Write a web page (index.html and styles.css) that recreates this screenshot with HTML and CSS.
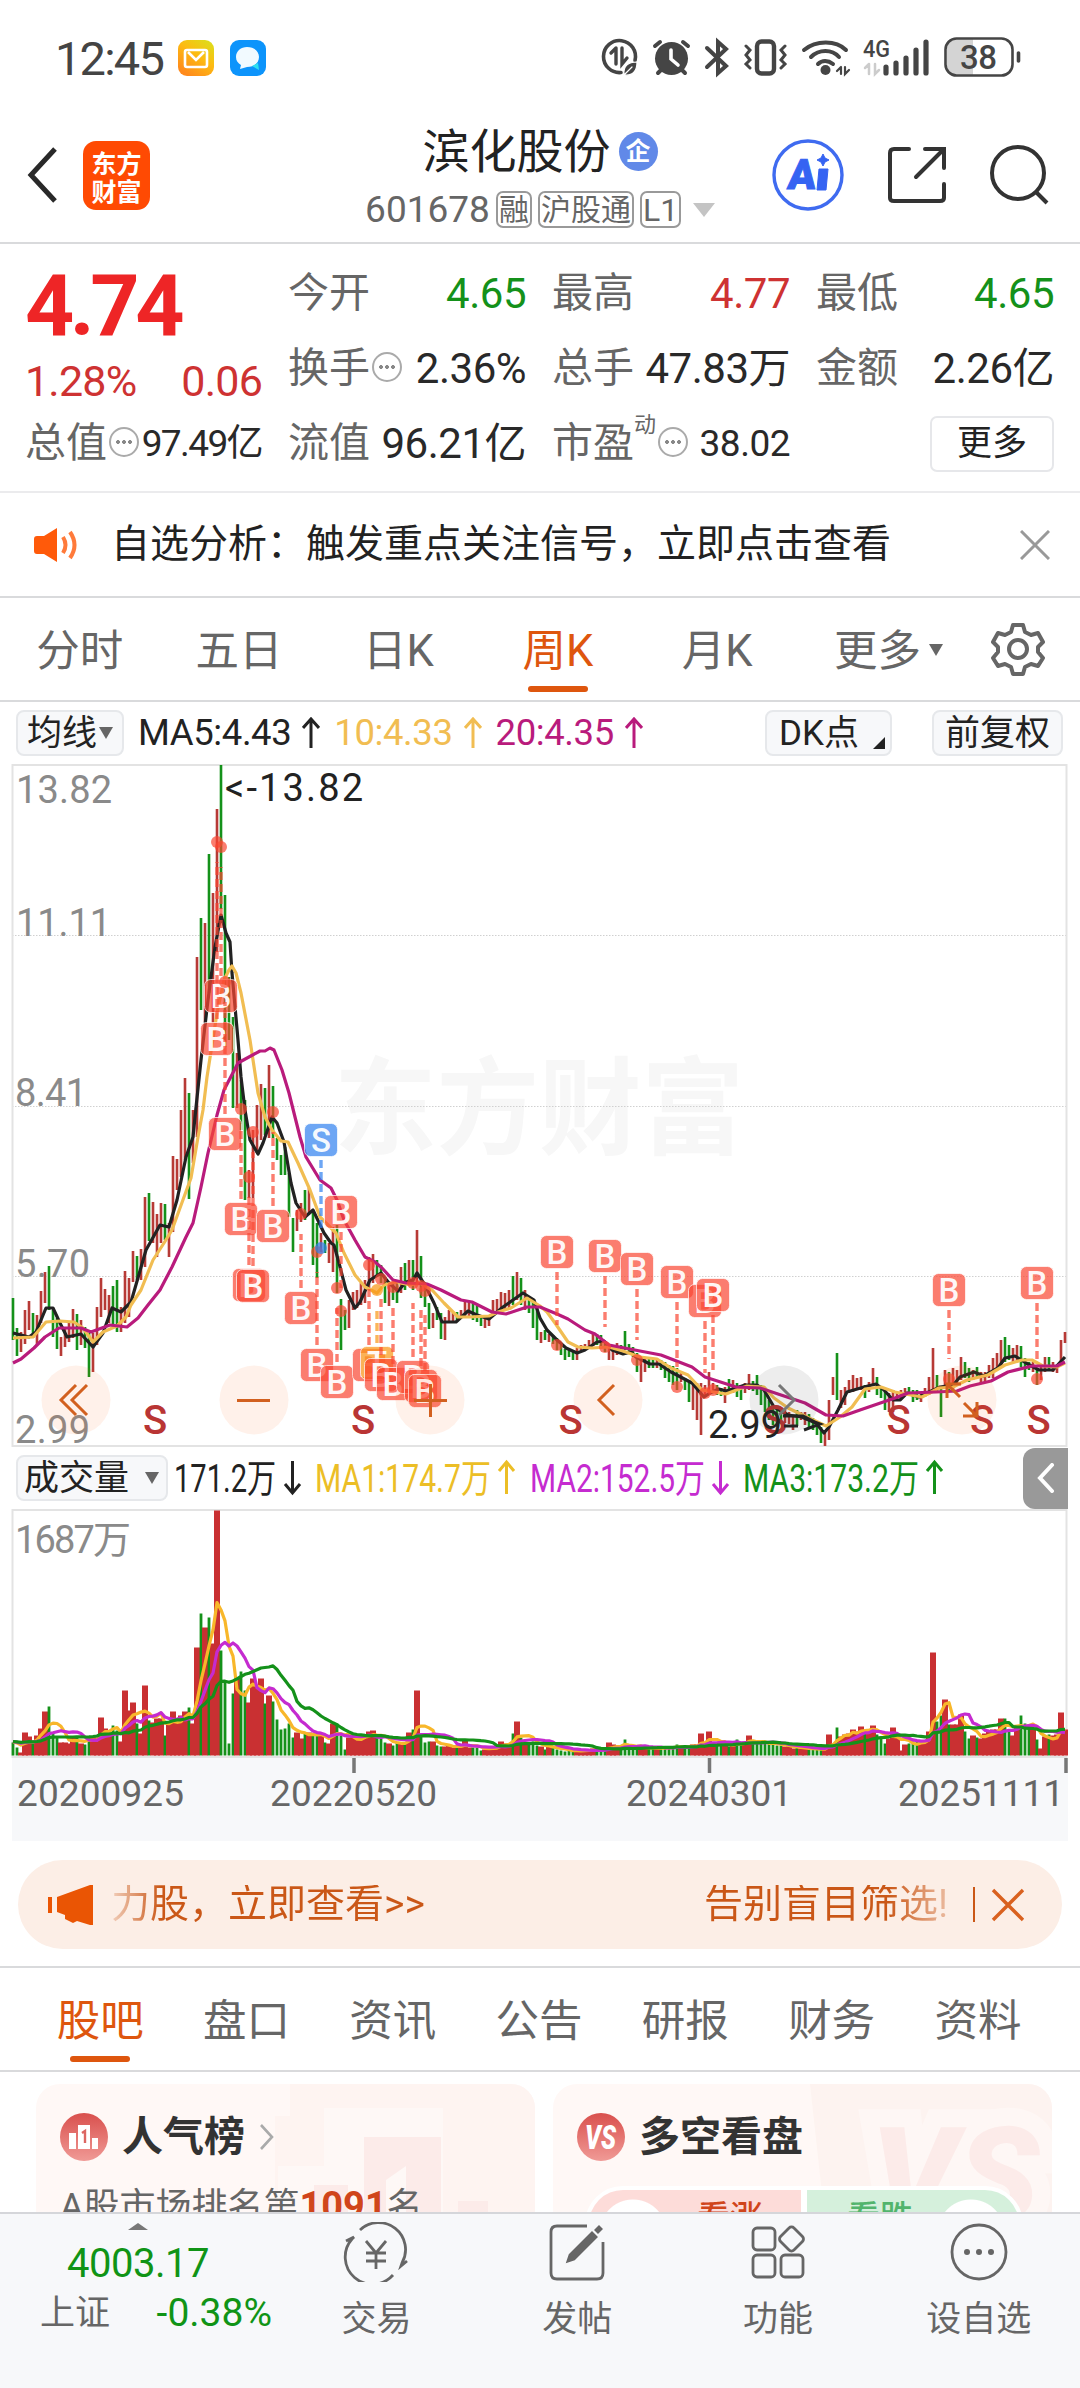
FILE: index.html
```html
<!DOCTYPE html>
<html lang="zh-CN">
<head>
  <meta charset="UTF-8" />
  <meta name="viewport" content="width=device-width, initial-scale=1.0" />
  <title>滨化股份 601678</title>
  <link rel="stylesheet" href="styles.css">
</head>
<body>
  <div class="status-bar">
    <span class="clock">12:45</span>
    <svg class="app-dot" width="36" height="36" viewBox="0 0 36 36">
      <defs><linearGradient id="mail" x1="1" y1="0" x2="0.3" y2="1"><stop offset="0" stop-color="#d8e21c"/><stop offset="0.5" stop-color="#fdbb11"/><stop offset="1" stop-color="#ff8a1c"/></linearGradient></defs>
      <rect width="36" height="36" rx="9" fill="url(#mail)"/>
      <rect x="7" y="10" width="22" height="17" rx="2" fill="none" stroke="#fff" stroke-width="2.6"/>
      <path d="M10 12l8 8 8-8" fill="none" stroke="#fff" stroke-width="2.6"/>
    </svg>
    <svg class="app-dot" width="36" height="36" viewBox="0 0 36 36">
      <rect width="36" height="36" rx="9" fill="#0d94fb"/>
      <path d="M17 7c7 0 12 4 12 10s-5 10-12 10l-7 2 1-4c-3-2-5-4-5-8 0-6 5-10 11-10z" fill="#f2faff"/>
      <path d="M22 26l6-3 1 7z" fill="#2fe0f0"/>
    </svg>
    <svg class="status-icons" width="424" height="44" viewBox="598 36 424 44" fill="none" stroke="#454545" stroke-width="4" stroke-linecap="round">
      <path d="M621 72.500a16 16 0 1 1 14-12" stroke-width="3.600"/>
      <path d="M616 48v16M616 48l-5 5M622 48v16l5-6" stroke-width="3.400"/>
      <path d="M624 75c-1-9 4-13 13-13 0 9-4 14-13 13zl8-8" fill="#454545" stroke="#fff" stroke-width="1.200"/>
      <circle cx="671.500" cy="58.500" r="16.500" fill="#454545" stroke="none"/>
      <path d="M655 46l5-4M688 46l-5-4M661 70l-3 3M682 70l3 3"/>
      <path d="M671 50v9l7 6" stroke="#fff" stroke-width="3.600"/>
      <path d="M707 48l19 18-8 7V42l8 7-19 18"/>
      <rect x="757" y="41.500" width="17" height="32" rx="4.500" stroke-width="4.400"/>
      <path d="M746 46l4 4-4 5 4 5-4 4 4 4M785 46l-4 4 4 5-4 5 4 4-4 4" stroke-width="3"/>
      <path d="M804 50c12-10 32-10 42 0M811 57c8-8 21-8 28 0M818 64c4-4 10-4 15 0" stroke-width="4"/>
      <circle cx="825.500" cy="70" r="5" fill="#454545" stroke="none"/>
      <path d="M841 67v7M841 67l-4 4M845 67v7l4-4" stroke-width="2.200"/>
      <text x="863" y="57" font-size="24" textLength="27" lengthAdjust="spacingAndGlyphs" font-weight="500" fill="#454545" stroke="none">4G</text>
      <path d="M869 64v10M869 64l-4 4M875 64v10l4-4" stroke="#ccc" stroke-width="2.500"/>
      <path d="M886 73V67M896 73V63M906 73V58M916 73V50M926 73V42" stroke-width="5.200"/>
      <path d="M973 39H956q-9 0-9 9v18q0 9 9 9h17z" fill="#d4d4d4" stroke="none"/>
      <rect x="945.500" y="38.500" width="67" height="37" rx="11" stroke-width="2.600"/>
      <path d="M1018.500 53v8" stroke-width="3.600"/>
      <text x="960" y="68.500" font-size="33" font-weight="500" textLength="37" fill="#454545" stroke="none">38</text>
    </svg>
  </div>

  <header class="header">
    <div class="header-left">
      <svg width="32" height="56" viewBox="0 0 32 56"><path d="M28 2L4 28l24 26" fill="none" stroke="#292929" stroke-width="5"/></svg>
      <div class="logo">东方<br>财富</div>
    </div>
    <div class="title">
      <div class="stock-name">滨化股份<span class="badge">企</span></div>
      <div class="stock-code"><span>601678</span><i class="tag">融</i><i class="tag">沪股通</i><i class="tag l1">L1</i><b class="caret"></b></div>
    </div>
    <div class="header-right">
      <svg width="74" height="74" viewBox="0 0 74 74">
        <circle cx="37" cy="37" r="34" fill="none" stroke="#3f6bf0" stroke-width="3.400"/>
        <text x="21" y="51" font-size="42" font-weight="900" textLength="28" lengthAdjust="spacingAndGlyphs" transform="skewX(-6)" fill="#3563f2" stroke="#3563f2">A</text>
        <path d="M48 31h9l-2 21h-9z" fill="#3563f2" stroke="#3563f2" stroke-linejoin="round"/>
        <path d="M52 16l2 4 4 2-4 2-2 4-2-4-4-2 4-2z" fill="#3563f2" stroke="#3563f2"/>
      </svg>
      <svg width="58" height="58" viewBox="0 0 58 58" fill="none" stroke="#333" stroke-width="4" stroke-linecap="round"><path d="M21 3H6q-4 0-4 4v45q0 3 4 3h46q4 0 4-3V38M37 3h19v19M55 4L28 31"/></svg>
      <svg width="60" height="60" viewBox="0 0 60 60" fill="none" stroke="#333" stroke-width="4"><circle cx="29" cy="28" r="26"/><path d="M46 46l12 12"/></svg>
    </div>
  </header>

  <section class="quote">
    <div class="price-col">
      <div class="price">4.74</div>
      <div class="change"><span>1.28%</span><span>0.06</span></div>
      <div class="cell"><span class="label">总值</span><b class="info"></b><span class="value small">97.49亿</span></div>
    </div>
    <div class="grid">
      <div class="cell"><span class="label">今开</span><span class="value down">4.65</span></div>
      <div class="cell"><span class="label">最高</span><span class="value up">4.77</span></div>
      <div class="cell"><span class="label">最低</span><span class="value down">4.65</span></div>
      <div class="cell"><span class="label">换手</span><b class="info"></b><span class="value">2.36%</span></div>
      <div class="cell"><span class="label">总手</span><span class="value">47.83万</span></div>
      <div class="cell"><span class="label">金额</span><span class="value">2.26亿</span></div>
      <div class="cell"><span class="label">流值</span><span class="value">96.21亿</span></div>
      <div class="cell"><span class="label">市盈</span><sup>动</sup><b class="info"></b><span class="value small">38.02</span></div>
      <div class="cell"><span class="more-btn">更多</span></div>
    </div>
  </section>

  <div class="notice">
    <svg width="46" height="38" viewBox="0 0 46 38"><path d="M1 13q0-3 3-3h7L24 2v34l-13-8H4q-3 0-3-3z" fill="#ff5a0a"/><path d="M30 11q5 8 0 16M37 6q9 13 0 26" fill="none" stroke="#ff7a3a" stroke-width="4"/></svg>
    <span>自选分析：触发重点关注信号，立即点击查看</span>
    <svg class="close" width="30" height="30" viewBox="0 0 30 30"><path d="M1 1l28 28M29 1L1 29" stroke="#999" stroke-width="3"/></svg>
  </div>

  <nav class="tabs period-tabs">
    <div class="tab">分时</div>
    <div class="tab">五日</div>
    <div class="tab">日K</div>
    <div class="tab active">周K</div>
    <div class="tab">月K</div>
    <div class="tab wide">更多<b class="caret dark"></b></div>
    <svg width="54" height="54" viewBox="0 0 54 54" fill="none" stroke="#666" stroke-width="4"><path d="M22 3h10l2 7 6 3 7-2 5 9-5 5v5l5 6-5 8-7-2-6 3-2 7H22l-2-7-6-3-7 2-5-8 5-6v-5l-5-5 5-9 7 2 6-3z" stroke-linejoin="round"/><circle cx="27" cy="27" r="9"/></svg>
  </nav>

  <div class="ma-row">
    <span class="chip">均线<b class="caret dark"></b></span>
    <span class="ma">MA5:4.43<svg class="arrow" viewBox="0 0 18 32"><path d="M9 31V2M1 11l8-9 8 9"/></svg></span>
    <span class="ma yellow">10:4.33<svg class="arrow" viewBox="0 0 18 32"><path d="M9 31V2M1 11l8-9 8 9"/></svg></span>
    <span class="ma pink">20:4.35<svg class="arrow" viewBox="0 0 18 32"><path d="M9 31V2M1 11l8-9 8 9"/></svg></span>
    <span class="chip dk">DK点<svg width="12" height="12" viewBox="0 0 12 12"><path d="M12 0v12H0z" fill="#222"/></svg></span>
    <span class="chip adjust">前复权</span>
  </div>

  <svg class="chart" width="1080" height="683" viewBox="0 764 1080 683">
    <text class="watermark" x="334" y="1146" textLength="410" lengthAdjust="spacingAndGlyphs">东方财富</text>
    <path class="grid-line" d="M12 935.500H1067M12 1106.500H1067M12 1276.500H1067"/>
    <rect class="frame" x="12.500" y="765" width="1054" height="681"/>
    <g class="axis-text">
      <text x="16" y="803" textLength="96">13.82</text>
      <text x="16" y="936" textLength="95">11.11</text>
      <text x="15" y="1106" textLength="72">8.41</text>
      <text x="15" y="1277" textLength="75">5.70</text>
      <text x="15" y="1443" textLength="75">2.99</text>
    </g>
    <g id="candles"></g>
    <polyline class="line black" points="13,1333 29,1337 36,1332 46,1308 53,1308 60,1323 67,1337 81,1334 93,1347 103,1333 112,1308 121,1312 131,1302 146,1250 160,1225 169,1227 177,1200 186,1157 193,1137 195,1117 201,1060 208,1000 215,947 221,915 226,933 230,942 232,973 238,1040 241,1077 245,1110 250,1140 258,1154 263,1143 272,1117 277,1123 284,1142 291,1183 296,1203 305,1217 313,1210 324,1233 331,1243 334,1245 339,1263 346,1290 355,1308 360,1302 370,1280 381,1273 389,1283 398,1291 406,1282 413,1280 417,1273 425,1285 434,1303 442,1322 456,1322 468,1311 477,1315 489,1319 503,1307 513,1300 523,1293 534,1300 540,1318 547,1330 557,1340 566,1348 577,1353 585,1350 597,1342 604,1341 612,1350 623,1354 631,1352 636,1357 650,1364 659,1364 671,1372 692,1383 704,1397 710,1393 719,1389 726,1391 736,1388 745,1385 757,1385 764,1390 774,1407 788,1415 802,1417 816,1423 824,1433 829,1427 838,1410 847,1392 864,1387 876,1384 884,1390 893,1400 900,1400 907,1393 919,1397 929,1392 940,1387 953,1385 960,1377 974,1372 984,1376 998,1368 1005,1358 1015,1356 1026,1363 1039,1370 1053,1370 1065,1357"/>
    <polyline class="line yellow" points="13,1338 33,1337 46,1322 60,1321 74,1322 83,1328 93,1342 103,1332 117,1326 126,1317 131,1305 141,1290 153,1260 164,1243 172,1230 184,1197 191,1178 198,1137 203,1110 207,1077 217,1013 224,980 229,970 232,966 236,973 241,993 250,1040 258,1093 265,1117 272,1130 281,1141 288,1142 298,1163 310,1190 320,1217 336,1233 344,1253 355,1275 365,1287 377,1293 384,1285 396,1282 410,1285 420,1283 432,1290 444,1303 458,1317 470,1317 489,1316 498,1312 511,1308 527,1298 540,1306 547,1312 555,1323 568,1342 578,1347 592,1348 609,1347 623,1351 640,1357 657,1359 671,1368 688,1375 702,1390 726,1394 747,1386 764,1387 774,1398 788,1408 809,1418 826,1426 840,1417 852,1407 865,1389 881,1387 895,1392 905,1394 922,1397 939,1388 953,1387 967,1380 988,1375 1005,1365 1022,1360 1032,1360 1043,1366 1057,1367 1065,1363"/>
    <polyline class="line pink" points="13,1363 21,1359 34,1348 45,1337 59,1328 81,1328 91,1332 110,1325 127,1327 138,1318 148,1305 160,1290 172,1267 186,1237 193,1223 201,1187 208,1153 217,1115 224,1090 238,1063 260,1051 265,1051 270,1048 274,1050 282,1070 289,1093 295,1117 300,1137 306,1157 320,1180 331,1188 337,1200 344,1220 355,1240 365,1257 375,1262 382,1268 393,1280 406,1283 427,1284 441,1290 461,1300 472,1302 492,1312 506,1314 527,1307 540,1307 557,1314 568,1319 585,1330 595,1334 609,1345 640,1351 661,1355 692,1367 705,1377 736,1387 760,1388 781,1395 805,1403 826,1415 843,1416 860,1410 895,1398 908,1393 936,1392 957,1391 970,1386 991,1381 1008,1372 1032,1366 1057,1366 1065,1362"/>
    <g class="sell-row">
      <text x="155" y="1434">S</text><text x="363" y="1434">S</text><text x="570.500" y="1434">S</text><text x="775" y="1434">S</text><text x="898.500" y="1434">S</text><text x="982" y="1434">S</text><text x="1038.500" y="1434">S</text>
    </g>
    <g id="markers"></g>
    <g class="peak-text">
      <text x="225" y="801" textLength="138">&lt;-13.82</text>
      <text x="708" y="1438" textLength="74">2.99</text>
      <path d="M784 1426h14M783 1416h20l16 8M804 1418l16 6-16 6"/>
    </g>
    <g class="controls">
      <circle cx="76" cy="1400" r="34.500"/><circle cx="254" cy="1400" r="34.500"/><circle cx="430" cy="1400" r="34.500"/><circle cx="608" cy="1400" r="34.500"/><circle class="off" cx="784" cy="1400" r="34.500"/><circle cx="962" cy="1400" r="34.500"/>
      <path d="M76 1385l-15 15 15 15M87 1385l-15 15 15 15M237 1400.500h33M414 1400.500h33M430.500 1384v33M614 1385l-15 15 15 15M960 1397l-12-12M947 1398v-14h14M964 1403l12 12M963 1416h14v-14"/>
      <path class="off-line" d="M779 1385l15 15-15 15"/>
    </g>
  </svg>

  <div class="vol-row">
    <span class="chip">成交量<b class="caret dark"></b></span>
    <svg width="780" height="46" viewBox="172 1455 780 46">
      <g class="vol-text">
        <text x="174" y="1492" textLength="102" lengthAdjust="spacingAndGlyphs" fill="#222">171.2万</text>
        <text x="315" y="1492" textLength="176" lengthAdjust="spacingAndGlyphs" fill="#ecbe26">MA1:174.7万</text>
        <text x="530" y="1492" textLength="175" lengthAdjust="spacingAndGlyphs" fill="#c52bd0">MA2:152.5万</text>
        <text x="743" y="1492" textLength="176" lengthAdjust="spacingAndGlyphs" fill="#14911a">MA3:173.2万</text>
      </g>
      <g fill="none" stroke-width="3">
        <path d="M292.500 1461v31M285 1484l7.500 9 7.500-9" stroke="#222"/>
        <path d="M506.500 1494v-31M499 1471l7.500-9 7.500 9" stroke="#ecbe26"/>
        <path d="M720.500 1461v31M713 1484l7.500 9 7.500-9" stroke="#c52bd0"/>
        <path d="M934.500 1494v-31M927 1471l7.500-9 7.500 9" stroke="#14911a"/>
      </g>
    </svg>
    <div class="expand"><svg width="18" height="30" viewBox="0 0 18 30"><path d="M15 2L3 15l12 13" fill="none" stroke="#fff" stroke-width="4" stroke-linecap="round"/></svg></div>
  </div>

  <svg class="chart" width="1080" height="332" viewBox="0 1509 1080 332">
    <rect x="12" y="1757" width="1056" height="84" fill="#f7f8fa"/>
    <rect class="frame" x="12.500" y="1510" width="1054" height="247"/>
    <text class="axis-text" x="15" y="1553" textLength="116">1687万</text>
    <g id="volumes"></g>
    <path d="M354 1758v15M709.500 1758v15M1066 1758v15" stroke="#777" stroke-width="3.500"/>
    <g class="date-text">
      <text x="17" y="1806" textLength="167">20200925</text>
      <text x="270" y="1806" textLength="167">20220520</text>
      <text x="626" y="1806" textLength="166">20240301</text>
      <text x="898" y="1806" textLength="166">20251111</text>
    </g>
  </svg>

  <div class="banner">
    <svg width="46" height="40" viewBox="0 0 46 40" fill="#ea5504"><path d="M0 12h4v16H0zM9 12L42 0h3v40h-3l-13-4-4 2-8-4v-4l-8-3z"/></svg>
    <span class="banner-left">力股，立即查看&gt;&gt;</span>
    <span class="banner-right">告别盲目筛选!</span>
    <i class="divider"></i>
    <svg width="34" height="34" viewBox="0 0 34 34"><path d="M2 2l30 30M32 2L2 32" stroke="#d9611f" stroke-width="3.400"/></svg>
  </div>

  <nav class="tabs info-tabs">
    <div class="tab active">股吧</div>
    <div class="tab">盘口</div>
    <div class="tab">资讯</div>
    <div class="tab">公告</div>
    <div class="tab">研报</div>
    <div class="tab">财务</div>
    <div class="tab">资料</div>
  </nav>

  <section class="cards">
    <div class="card">
      <svg class="card-bg" width="260" height="128" viewBox="275 0 260 128"><path d="M275 32h15V0h245v128H275z" fill="#fef4f1"/><path d="M278 82h46V24h119v104H278z" fill="#fef8f6"/><path d="M364 53h77v75h-35V82l-20 14v32h-22zM314 101h34v27h-34zM458 117h30v11h-30z" fill="#fcebe9"/></svg>
      <div class="card-title">
        <svg width="48" height="48" viewBox="0 0 48 48"><defs><linearGradient id="red" x1="0" y1="0" x2="0" y2="1"><stop offset="0" stop-color="#d9504d"/><stop offset="1" stop-color="#f09a96"/></linearGradient></defs><circle cx="24" cy="24" r="24" fill="url(#red)"/><path d="M9 20h7v16H9zM18 12h12v24H18zM32 25h6v11h-6z" fill="#fff"/><path d="M22 20l3-2v12" fill="none" stroke="#dd6662" stroke-width="2.400"/></svg>
        人气榜
        <svg width="16" height="26" viewBox="0 0 16 26"><path d="M2 1l11 12L2 25" fill="none" stroke="#aaa" stroke-width="2.600"/></svg>
      </div>
      <div class="rank">A股市场排名第<b>1091</b>名</div>
    </div>
    <div class="card">
      <svg class="card-bg" width="260" height="128" viewBox="275 0 260 128"><path d="M293 0h242v128H307z" fill="#fdf3f0"/><text class="card-vs" x="354" y="138" textLength="168" lengthAdjust="spacingAndGlyphs">VS</text></svg>
      <div class="card-title">
        <svg width="48" height="48" viewBox="0 0 48 48"><circle cx="24" cy="24" r="24" fill="url(#red)"/><text x="8" y="36" font-size="33" font-weight="900" font-style="italic" textLength="31" lengthAdjust="spacingAndGlyphs" fill="#fff">VS</text></svg>
        多空看盘
      </div>
      <div class="vote"><div class="vote-up">看涨</div><div class="vote-down">看跌</div></div>
    </div>
  </section>

  <footer class="bottom-bar">
    <div class="index">
      <b class="caret-up"></b>
      <div class="index-value">4003.17</div>
      <div class="index-row"><span>上证</span><em>-0.38%</em></div>
    </div>
    <div class="nav-item">
      <svg width="66" height="60" viewBox="0 0 66 60"><path d="M17 8a27 27 0 0 1 42 33l-1 3 6-5M50 53A27 27 0 0 1 9 17l2-2-8 4M23 19l10 12 10-12M33 31v16M23 31h20M23 39h20"/></svg>
      <span>交易</span>
    </div>
    <div class="nav-item">
      <svg width="60" height="60" viewBox="0 0 60 60"><path d="M40 4H10q-6 0-6 6v41q0 6 6 6h40q6 0 6-6V20"/><path d="M21 39l2-6 22-22 4 4-22 22zM49 8l3-3 2 2-3 3z" fill="#666"/></svg>
      <span>发帖</span>
    </div>
    <div class="nav-item">
      <svg width="60" height="60" viewBox="0 0 60 60"><rect x="5" y="6" width="22" height="22" rx="4"/><rect x="5" y="33" width="22" height="22" rx="4"/><rect x="33" y="33" width="22" height="22" rx="4"/><rect x="34" y="7.500" width="19" height="19" rx="3.500" transform="rotate(45 43.500 17)"/></svg>
      <span>功能</span>
    </div>
    <div class="nav-item">
      <svg width="60" height="60" viewBox="0 0 60 60"><circle cx="30" cy="30" r="27"/><g fill="#666" stroke="none"><circle cx="18" cy="30" r="3"/><circle cx="30" cy="30" r="3"/><circle cx="42" cy="30" r="3"/></g></svg>
      <span>设自选</span>
    </div>
  </footer>
  <script src="script.js"></script>
</body>
</html>
```
FILE: styles.css
```css
* {
  box-sizing: border-box;
}
body {
  margin: 0;
  width: 1080px;
  height: 2388px;
  overflow: hidden;
  background: #fff;
  color: #222;
  font-family: Roboto, "Noto Sans CJK SC", sans-serif;
  line-height: 1;
}
svg {
  display: block;
  flex: none;
}
i, em {
  font-style: normal;
}
.caret {
  border: 11px solid transparent;
  border-top: 14px solid #c4c4c4;
  border-bottom: 0;
}
.caret.dark {
  border-width: 12px 7.5px 0;
  border-top-color: #666;
}

/* status bar */
.status-bar {
  display: flex;
  align-items: center;
  height: 116px;
  padding-left: 55px;
}
.clock {
  width: 123px;
  font-size: 47px;
  letter-spacing: -1.8px;
  color: #444;
}
.app-dot {
  margin-right: 16px;
}
.status-icons {
  margin-left: 316px;
}

/* header */
.header {
  display: grid;
  grid-template-columns: 330px 1fr 330px;
  height: 128px;
  padding: 0 27px;
  border-bottom: 2px solid #d9dadc;
}
.header-left {
  display: flex;
  align-items: center;
  gap: 24px;
  padding-bottom: 8px;
}
.logo {
  width: 67px;
  height: 69px;
  padding-top: 7px;
  border-radius: 13px;
  background: #ff4a03;
  color: #fff;
  font-family: "Noto Sans CJK SC", sans-serif;
  font-size: 25px;
  font-weight: 700;
  line-height: 28px;
  text-align: center;
}
.title {
  display: flex;
  flex-direction: column;
  align-items: center;
}
.stock-name {
  display: flex;
  align-items: center;
  margin-top: 8px;
  height: 54px;
  font-size: 47px;
  white-space: nowrap;
}
.badge {
  display: grid;
  place-items: center;
  width: 39px;
  height: 39px;
  margin-left: 8px;
  border-radius: 50%;
  background: #6189e8;
  color: #fff;
  font-size: 25px;
  font-weight: 700;
}
.stock-code {
  display: flex;
  align-items: center;
  gap: 6px;
  margin-top: 13px;
  font-size: 37px;
  color: #666;
  white-space: nowrap;
}
.stock-code .tag {
  display: grid;
  place-items: center;
  height: 37px;
  padding: 0 1px;
  border: 2px solid #999;
  border-radius: 7px;
  font-size: 30px;
}
.stock-code .l1 {
  width: 41px;
  font-size: 32px;
}
.stock-code .caret {
  margin-left: 6px;
}
.header-right {
  display: flex;
  align-items: center;
  justify-content: flex-end;
  gap: 43px;
  padding: 0 4px 9px 0;
}

/* quote */
.quote {
  display: flex;
  height: 249px;
  padding: 12px 26px 0 25px;
  border-bottom: 2px solid #ebebed;
}
.price-col {
  width: 238px;
  margin-right: 26px;
}
.price {
  height: 100px;
  padding-top: 7px;
  color: #ee2526;
  font-size: 86px;
  font-weight: 700;
  letter-spacing: -4.5px;
}
.change {
  display: flex;
  justify-content: space-between;
  align-items: center;
  height: 50px;
  color: #ce3232;
  font-size: 43px;
  letter-spacing: -0.8px;
}
.price-col .value.small {
  letter-spacing: -1.6px;
}
.grid {
  display: grid;
  grid-template-columns: repeat(3, 238px);
  grid-auto-rows: 75px;
  column-gap: 26px;
}
.cell {
  display: flex;
  align-items: center;
  height: 75px;
  white-space: nowrap;
}
.label {
  color: #666;
  font-size: 41px;
}
.value {
  margin-left: auto;
  color: #292929;
  font-size: 42px;
  letter-spacing: -0.5px;
}
.value.small {
  font-size: 37px;
}
.value.up {
  color: #ce3232;
}
.value.down {
  color: #14911a;
}
.info {
  display: grid;
  place-items: center;
  flex: none;
  width: 30px;
  height: 30px;
  margin: 0 0 4px 2px;
  border: 2px solid #aaa;
  border-radius: 50%;
}
.info::after {
  content: "";
  width: 18px;
  height: 6px;
  background: radial-gradient(circle, #888 1.6px, transparent 2.2px) 0 0 / 6px 6px;
}
.cell sup {
  align-self: flex-start;
  margin-top: 8px;
  color: #666;
  font-size: 22px;
  line-height: 1;
}
.more-btn {
  display: grid;
  place-items: center;
  width: 124px;
  height: 56px;
  margin-left: auto;
  border: 2px solid #e6e7ea;
  border-radius: 7px;
  font-size: 35px;
}

/* notice */
.notice {
  display: flex;
  align-items: center;
  height: 105px;
  padding: 0 30px 0 33px;
  border-bottom: 2px solid #d9dadc;
  font-size: 39px;
}
.notice span {
  margin-left: 32px;
}
.notice .close {
  margin-left: auto;
}

/* tabs */
.tabs {
  display: flex;
  align-items: center;
  border-bottom: 2px solid #d9dadc;
  height: 104px;
  color: #666;
  font-size: 43.5px;
}
.tab {
  display: flex;
  align-items: center;
  justify-content: center;
  position: relative;
  width: 159.4px;
  height: 100%;
  padding-top: 5px;
}
.tab.wide {
  width: 183px;
}
.tab .caret {
  margin: 0 0 4px 8px;
}
.tab.active {
  color: #de560e;
}
.tab.active::after {
  content: "";
  position: absolute;
  bottom: 8px;
  width: 60px;
  height: 6px;
  border-radius: 3px;
  background: #de560e;
}
.period-tabs svg {
  margin-left: 11px;
}

/* moving averages */
.ma-row {
  display: flex;
  align-items: center;
  height: 62px;
  padding: 0 17px 0 16px;
}
.chip {
  display: flex;
  align-items: center;
  height: 46px;
  padding: 0 9px;
  border: 2px solid #e6e8eb;
  border-radius: 8px;
  background: #f7f8fa;
  font-size: 35px;
  white-space: nowrap;
}
.chip .caret {
  margin-left: 2px;
}
.ma {
  display: flex;
  align-items: center;
  margin-left: 14px;
  font-size: 36.5px;
  letter-spacing: -0.4px;
}
.ma .arrow {
  width: 18px;
  height: 32px;
  margin-left: 11px;
  fill: none;
  stroke: currentColor;
  stroke-width: 3;
}
.ma.yellow {
  color: #f1bd52;
}
.ma.pink {
  color: #b91b7c;
}
.dk {
  width: 127px;
  margin: 0 40px 0 auto;
  padding: 0 5px 0 12px;
}
.dk svg {
  align-self: flex-end;
  margin: 0 0 5px auto;
}
.adjust {
  width: 131px;
  justify-content: center;
  padding: 0;
}

/* charts */
.frame {
  fill: none;
  stroke: #e3e3e3;
  stroke-width: 2;
}
.grid-line {
  stroke: #d0d0d0;
  stroke-dasharray: 1.5 1.5;
}
.watermark {
  fill: #f7f7f7;
  font-size: 106px;
  font-weight: 700;
}
.axis-text {
  fill: #8a8a8a;
  font-size: 38px;
}
.date-text {
  fill: #666;
  font-size: 37px;
}
.vol-text {
  font-size: 39px;
}
.peak-text {
  fill: #222;
  font-size: 38px;
}
.peak-text path {
  fill: none;
  stroke: #222;
  stroke-width: 3;
}
.line {
  fill: none;
  stroke-width: 3.2;
  stroke-linejoin: round;
}
.line.black {
  stroke: #222;
}
.line.yellow {
  stroke: #f1bd52;
}
.line.pink {
  stroke: #b91b7c;
}
.line.gold {
  stroke: #f8b72a;
}
.line.purple {
  stroke: #c52bd0;
}
.line.green {
  stroke: #14911a;
}
.up-bar {
  fill: #b73a36;
}
.down-bar {
  fill: #14911a;
}
.vol-up {
  fill: #c93032;
}
.sell-row {
  fill: #b93534;
  font-size: 40px;
  font-weight: 500;
  text-anchor: middle;
}
.mark-text {
  fill: #fff;
  font-size: 33px;
  font-weight: 500;
  text-anchor: middle;
}
.controls {
  fill: none;
  stroke: #d2601f;
  stroke-width: 3;
}
.controls circle {
  fill: #fa6414;
  fill-opacity: 0.09;
  stroke: none;
}
.controls circle.off {
  fill: #333;
}
.off-line {
  stroke: #777;
}

/* volume header */
.vol-row {
  display: flex;
  align-items: center;
  height: 62px;
  padding: 0 12px 0 16px;
}
.vol-row .chip {
  width: 152px;
  margin-right: 4px;
  padding: 0 7px 0 6px;
}
.vol-row .caret {
  margin-left: auto;
}
.expand {
  display: grid;
  place-items: center;
  width: 45px;
  height: 61px;
  margin-left: auto;
  border-radius: 12px 0 0 12px;
  background: #999;
}

/* banner */
.banner {
  display: flex;
  align-items: center;
  height: 89px;
  margin: 19px 18px 17px;
  padding: 0 37px 0 30px;
  border-radius: 45px;
  background: #fceee6;
  color: #ca5717;
  font-size: 39px;
}
.banner-left {
  margin-left: 17px;
  background: linear-gradient(90deg, #ca571733, #ca5717 50px);
  background-clip: text;
  color: transparent;
}
.banner-right {
  margin-left: auto;
  background: linear-gradient(270deg, #ca571755, #ca5717 60px);
  background-clip: text;
  color: transparent;
}
.divider {
  width: 2px;
  height: 35px;
  margin: 0 16px 0 25px;
  background: #ca5717;
}

/* info tabs */
.info-tabs {
  height: 106px;
  padding-left: 27px;
  border-top: 2px solid #d9dadc;
}
.info-tabs .tab {
  width: 146.3px;
}

/* cards */
.cards {
  display: flex;
  gap: 18px;
  height: 140px;
  padding: 12px 28px 0 36px;
  overflow: hidden;
}
.card {
  position: relative;
  width: 499px;
  height: 260px;
  padding: 27px 24px;
  border-radius: 24px;
  background: #fff8f6;
  overflow: hidden;
}
.card-bg {
  position: absolute;
  top: 0;
  right: 0;
}
.card-vs {
  font-size: 134px;
  font-weight: 900;
  font-style: italic;
  fill: #fcebe9;
  stroke: #fef7f5;
  stroke-width: 36px;
  paint-order: stroke;
}
.card-title {
  display: flex;
  align-items: center;
  position: relative;
  height: 52px;
  gap: 14px;
  color: #333;
  font-size: 41px;
  font-weight: 700;
}
.rank {
  position: relative;
  margin-top: 24px;
  color: #666;
  font-size: 36px;
}
.rank b {
  color: #d0451b;
  font-size: 38px;
}
.vote {
  display: flex;
  gap: 6px;
  position: relative;
  width: 438px;
  height: 76px;
  margin: 23px 0 0 8px;
  border: 4px solid #fff;
  border-radius: 38px;
  background: #fff;
  overflow: hidden;
}
.vote div {
  flex: none;
  width: 212px;
  padding-top: 11px;
  font-size: 33px;
  font-weight: 500;
  line-height: 33px;
}
.vote-up {
  padding-left: 108px;
  background: radial-gradient(circle at 44px 43px, #fff 33px, #fddcd9 34px);
  color: #d0451b;
}
.vote-down {
  padding-left: 40px;
  background: radial-gradient(circle at 164px 43px, #fff 33px, #d5f0dc 34px);
  color: #52b46c;
}

/* bottom bar */
.bottom-bar {
  display: flex;
  position: relative;
  height: 177px;
  border-top: 2px solid #d5d6da;
  background: #f7f8fa;
}
.index {
  display: flex;
  flex-direction: column;
  align-items: center;
  width: 276px;
  padding-top: 9px;
}
.caret-up {
  border: 10px solid transparent;
  border-bottom: 7px solid #777;
  border-top: 0;
}
.index-value {
  margin-top: 14px;
  color: #109416;
  font-size: 40px;
  letter-spacing: -0.5px;
}
.index-row {
  display: flex;
  align-items: center;
  justify-content: space-between;
  width: 232px;
  margin: 10px 0 0 36px;
  color: #666;
  font-size: 35px;
}
.index-row em {
  color: #109416;
  font-size: 39px;
}
.nav-item {
  display: flex;
  flex-direction: column;
  align-items: center;
  width: 200.8px;
  padding-top: 8px;
  color: #666;
  font-size: 35px;
}
.nav-item svg {
  fill: none;
  stroke: #666;
  stroke-width: 2.8;
}
.nav-item span {
  margin-top: 20px;
}
```
FILE: script.js
```js
const STEP = 4;
const X0 = 13;

// high/low of every weekly bar
const ranges = `1298,1340 1328,1356 1332,1352 1310,1344 1301,1330 1313,1338 1315,1345 1291,1323 1272,1303 1266,1310
1310,1337 1318,1349 1337,1356 1328,1347 1323,1342 1309,1338 1314,1350 1320,1345 1327,1348 1333,1377
1333,1372 1307,1345 1278,1317 1289,1310 1295,1323 1286,1327 1280,1332 1307,1332 1271,1323 1278,1317
1251,1282 1256,1280 1249,1280 1197,1267 1193,1241 1202,1243 1214,1257 1203,1243 1204,1240 1223,1257
1156,1232 1159,1190 1110,1177 1078,1160 1093,1199 1110,1163 957,1137 918,1010 923,1022 854,993
893,1023 809,952 765,909 895,1047 977,1040 1017,1108 1053,1108 1080,1130 1100,1200 1170,1198
1130,1198 1105,1153 1084,1140 1088,1135 1065,1138 1086,1138 1138,1160 1155,1175 1147,1175 1173,1217
1218,1252 1210,1231 1203,1222 1190,1220 1188,1213 1210,1265 1223,1278 1233,1252 1240,1253 1243,1263
1227,1272 1225,1293 1299,1350 1310,1330 1300,1328 1292,1310 1290,1308 1283,1305 1280,1303 1257,1290
1254,1283 1260,1277 1265,1283 1277,1303 1282,1306 1283,1300 1283,1303 1267,1293 1263,1290 1260,1285
1260,1290 1230,1283 1256,1298 1282,1307 1303,1329 1313,1328 1307,1320 1313,1339 1317,1340 1310,1322
1313,1322 1312,1322 1310,1318 1300,1317 1302,1317 1302,1320 1306,1322 1317,1326 1315,1328 1316,1326
1300,1316 1299,1314 1292,1314 1293,1310 1290,1310 1276,1305 1272,1300 1278,1305 1290,1310 1297,1313
1302,1328 1305,1340 1332,1343 1330,1340 1334,1342 1335,1344 1338,1350 1345,1355 1349,1360 1350,1357
1352,1360 1348,1360 1345,1350 1344,1350 1340,1347 1332,1346 1334,1345 1335,1348 1343,1352 1345,1360
1346,1360 1343,1355 1345,1352 1331,1350 1344,1353 1347,1357 1353,1372 1357,1382 1357,1372 1358,1368
1358,1368 1360,1368 1360,1370 1362,1378 1365,1382 1366,1385 1368,1390 1373,1382 1378,1390 1380,1402
1385,1410 1383,1420 1383,1435 1385,1395 1372,1395 1383,1393 1385,1395 1388,1396 1387,1403 1379,1393
1380,1393 1383,1397 1385,1400 1383,1393 1374,1390 1381,1391 1375,1395 1385,1405 1390,1412 1400,1420
1405,1425 1410,1425 1412,1423 1410,1423 1412,1424 1415,1430 1410,1426 1412,1420 1412,1425 1414,1428
1418,1430 1423,1435 1427,1443 1433,1446 1400,1440 1377,1395 1353,1400 1390,1408 1387,1405 1380,1393
1375,1392 1378,1388 1377,1390 1385,1398 1382,1392 1368,1385 1377,1395 1388,1398 1390,1410 1393,1412
1390,1412 1393,1400 1390,1398 1388,1396 1387,1395 1390,1402 1390,1400 1393,1402 1388,1397 1377,1395
1348,1390 1375,1392 1387,1417 1370,1385 1372,1390 1368,1392 1370,1385 1357,1380 1362,1378 1368,1382
1370,1380 1367,1378 1372,1383 1372,1382 1365,1378 1358,1378 1353,1370 1340,1368 1337,1362 1345,1360
1348,1362 1345,1362 1346,1367 1358,1377 1362,1370 1362,1372 1370,1385 1365,1380 1357,1372 1357,1370
1362,1372 1365,1373 1340,1365 1332,1343`.split(/\s+/).map(s => s.split(',').map(Number));

// bar height and direction (r = up, g = down)
const volumes = `13g 8g 3r 23r 19r 13g 20r 27r 44r 49g 22g 18g 13r 13r 12r 18r 18g 12r 11g 18g
18r 18r 38r 27r 20r 30g 25g 14r 65r 45r 53r 32g 22r 70r 35g 33r 37r 37r 20g 32r
44r 33r 40r 44r 48g 32r 108r 142g 128r 138g 112r 245r 105g 73g 12g 62g 78r 84g 65g 53r
77r 68r 77r 52g 60r 54g 36g 26g 27g 32g 18g 23r 17r 23g 23r 20g 20g 20r 13g 12r
32r 32g 20g 6g 18r 18r 20r 18r 17r 24r 25r 18g 17g 13g 12r 10g 13g 13r 13g 23r
26g 65r 20g 13g 14g 14r 10g 9g 9r 10r 8r 9g 9r 15r 8r 8g 8g 5g 6r 7r
9r 10r 14r 12r 11r 22g 34r 18g 13r 12g 14g 10g 9r 6g 9r 9g 6g 5g 4g 5g
4g 6r 4r 5r 6r 7r 5g 5g 6g 13r 11r 10r 6g 16g 9g 8g 7g 8r 8r 7g
7g 8r 7g 8g 8g 8g 11g 8r 8g 9g 11r 11r 22r 11r 24r 12r 11g 12g 10r 9g
10r 16g 12g 13r 20r 12g 12g 12g 13g 12g 12g 10g 10g 9r 9r 7r 8g 7r 7r 6g
6g 7g 6g 7r 21r 12r 28g 19r 21r 22r 26r 24r 29r 24g 24r 30r 21g 17g 12g 17r
28r 19r 5r 11r 12g 14g 14g 12r 14r 24r 103r 34g 40g 56r 31g 31r 31r 41r 24g 17g
20r 18g 17r 22r 24r 26r 26r 37r 37g 24g 20r 29r 40g 32g 29g 27r 16g 7r 19r 21g
20r 21r 43r 26r`.split(/\s+/);

// x, label y, dot y, kind
const marks = [
  [221, 996, 847, 'B'], [217, 1039, 842, 'B'], [225, 1134, 982, 'B'], [241, 1219, 1109, 'B'],
  [249, 1285, 1177, 'B'], [253, 1286, 1132, 'B'], [273, 1226, 1112, 'B'], [301, 1308, 1214, 'B'],
  [317, 1365, 1252, 'B'], [321, 1140, 1248, 'S'], [337, 1382, 1288, 'B'], [341, 1212, 1311, 'B'],
  [369, 1365, 1265, 'B'], [377, 1363, 1290, 'T'], [381, 1375, 1279, 'B'], [393, 1384, 1287, 'B'],
  [413, 1377, 1283, 'B'], [421, 1386, 1286, 'B'], [425, 1391, 1291, 'B'], [557, 1252, 1345, 'B'],
  [605, 1256, 1347, 'B'], [637, 1269, 1360, 'B'], [677, 1282, 1387, 'B'], [705, 1301, 1393, 'B'],
  [713, 1295, 1390, 'B'], [949, 1290, 1379, 'B'], [1037, 1283, 1379, 'B']
];
const markColors = { B: '#fa4632', S: '#2f80f0', T: '#fa9614' };

function barX(i) {
  return X0 + i * STEP;
}

function drawCandles() {
  let out = '';
  ranges.forEach(([hi, lo], i) => {
    const cls = volumes[i].endsWith('r') ? 'up-bar' : 'down-bar';
    out += `<rect class="${cls}" x="${barX(i) - 1.3}" y="${hi}" width="2.6" height="${lo - hi}"/>`;
  });
  document.getElementById('candles').innerHTML = out;
}

function drawMarks() {
  let out = '';
  marks.forEach(([x, y, dot, kind]) => {
    const color = markColors[kind];
    const from = y > dot ? y - 20 : y + 20;
    const to = y > dot ? dot + 20 : dot - 20;
    out += `<path d="M${x} ${from}V${to}" stroke="${color}" stroke-opacity=".7" stroke-width="3.4" stroke-dasharray="8 4"/>`;
    out += `<circle cx="${x}" cy="${dot}" r="6" fill="${color}" fill-opacity=".7"/>`;
    out += `<rect x="${x - 16.5}" y="${y - 16.5}" width="33" height="33" rx="6" fill="${color}" fill-opacity=".7" stroke="#fff" stroke-opacity=".7"/>`;
    out += `<text class="mark-text" x="${x}" y="${y + 12}" fill-opacity=".95">${kind}</text>`;
  });
  document.getElementById('markers').innerHTML = out;
}

function average(values, n) {
  return values.map((_, i) => {
    let sum = 0;
    for (let k = 0; k < n; k++) sum += i - k >= 0 ? values[i - k] : 14;
    return `${barX(i)},${(1755.5 - sum / n).toFixed(1)}`;
  }).join(' ');
}

function drawVolumes() {
  const heights = volumes.map(v => parseInt(v));
  let out = '';
  heights.forEach((h, i) => {
    const up = volumes[i].endsWith('r');
    const w = up ? 6 : 2.8;
    out += `<rect class="${up ? 'vol-up' : 'down-bar'}" x="${barX(i) - w / 2}" y="${1755.5 - h}" width="${w}" height="${h}"/>`;
  });
  out += `<polyline class="line gold" points="${average(heights, 5)}"/>`;
  out += `<polyline class="line purple" points="${average(heights, 10)}"/>`;
  out += `<polyline class="line green" points="${average(heights, 20)}"/>`;
  document.getElementById('volumes').innerHTML = out;
}

drawCandles();
drawMarks();
drawVolumes();
```
